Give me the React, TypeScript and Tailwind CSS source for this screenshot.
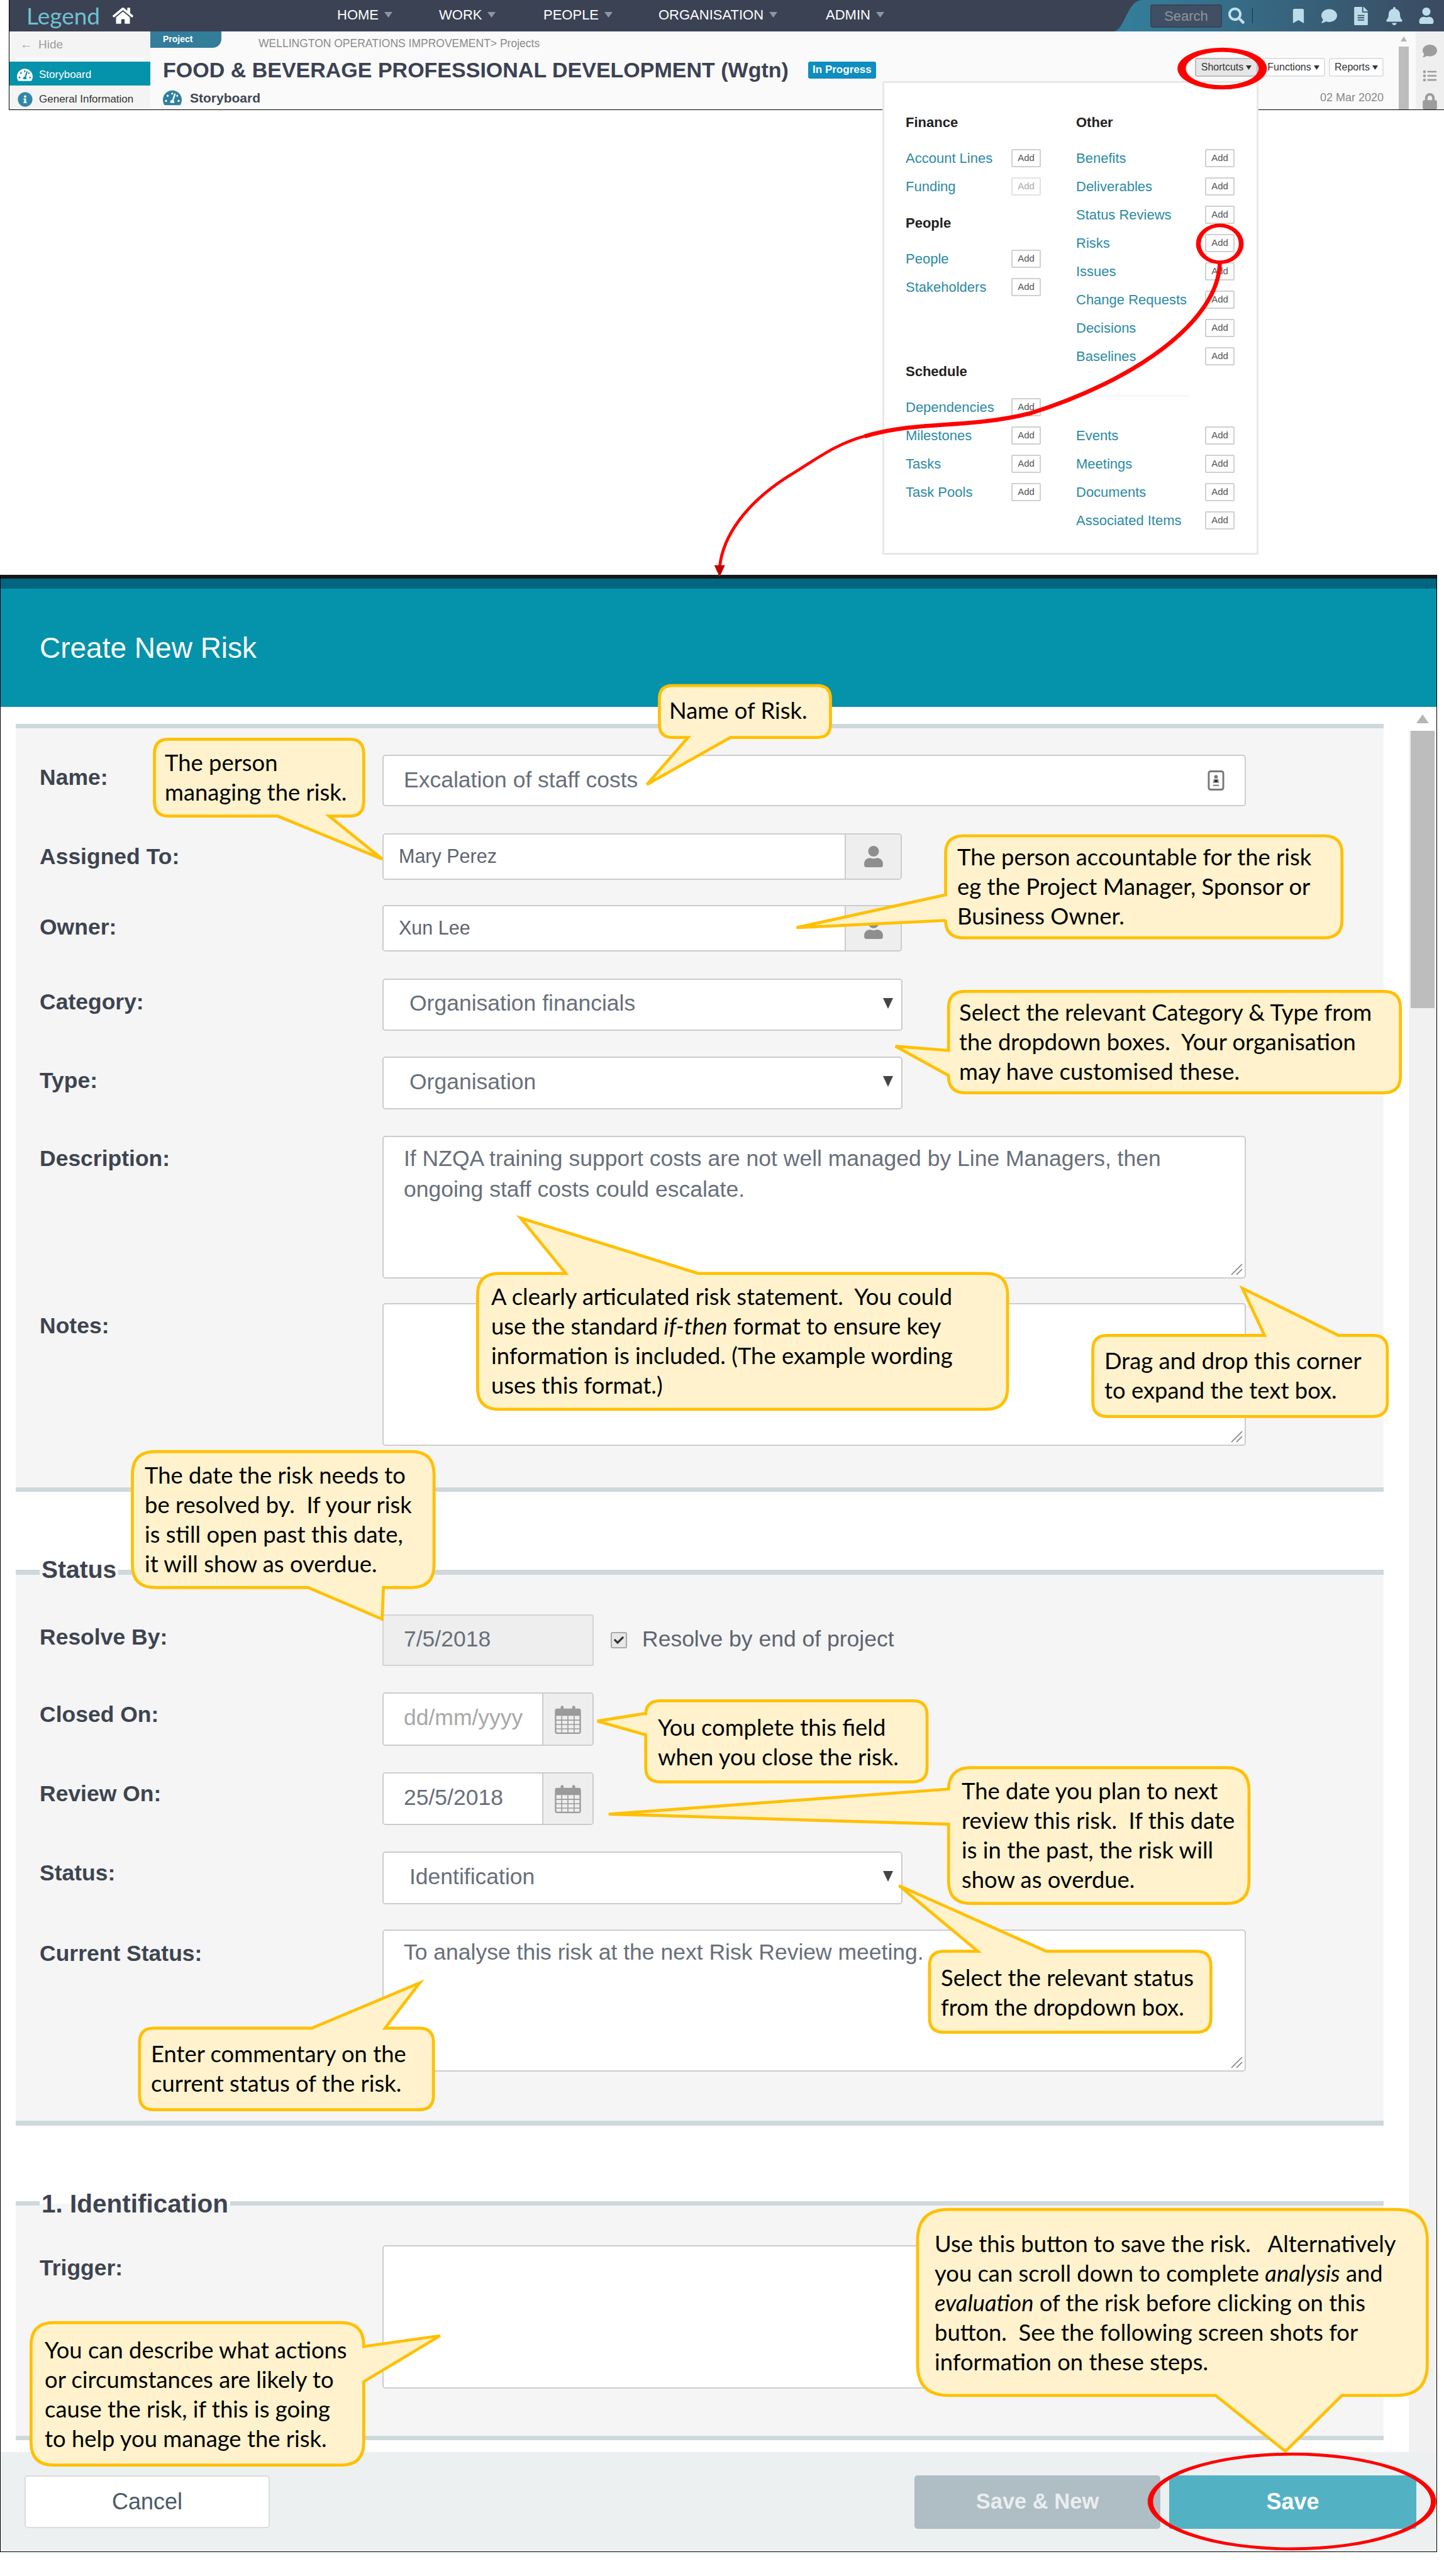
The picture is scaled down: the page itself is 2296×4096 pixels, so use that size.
import React from "react";
import {
  FaHome,
  FaBookmark,
  FaComment,
  FaFileAlt,
  FaBell,
  FaUser,
  FaSearch,
  FaTachometerAlt,
  FaInfoCircle,
  FaList,
  FaLock,
  FaCheck,
} from "react-icons/fa";

const Caret = ({ className }: { className: string }) => (
  <svg viewBox="0 0 10 8" preserveAspectRatio="none" className={className}>
    <polygon points="0,0 10,0 5,8" fill="currentColor" />
  </svg>
);

const Calendar = () => (
  <svg viewBox="0 0 40 40" className="w-[46px] h-[46px] text-[#9a9a9a]">
    <rect x="3" y="6" width="34" height="33" rx="2" fill="none" stroke="currentColor" strokeWidth="2" />
    <rect x="3" y="6" width="34" height="9" fill="currentColor" />
    <rect x="10" y="1" width="4" height="10" rx="2" fill="currentColor" />
    <rect x="26" y="1" width="4" height="10" rx="2" fill="currentColor" />
    <path d="M11.5 15v24M20 15v24M28.5 15v24M3 21h34M3 27h34M3 33h34" stroke="currentColor" strokeWidth="1.4" />
  </svg>
);

const Grip = () => (
  <svg viewBox="0 0 20 20" className="absolute right-[3px] bottom-[3px] w-[20px] h-[20px] text-[#777]">
    <path d="M2 19L19 2M10 19L19 10" stroke="currentColor" strokeWidth="1.5" />
  </svg>
);

const Label = ({ children, cls }: { children: React.ReactNode; cls?: string }) => (
  <div className={`w-[545px] shrink-0 text-[35.5px] leading-[40px] font-bold text-[#3d4450] ${cls || ""}`}>
    {children}
  </div>
);

const boxCls =
  "border-2 border-[#cccccc] rounded-[5px] bg-white text-[35.5px] text-[#686f7a] flex items-center";

const TextBox = ({ h, children }: { h: string; children?: React.ReactNode }) => (
  <div className={`relative w-[1373px] border-2 border-[#cccccc] rounded-[5px] bg-white text-[35.5px] leading-[49px] text-[#686f7a] pl-[32px] pt-[10px] ${h}`}>
    {children}
    <Grip />
  </div>
);

const PersonGroup = ({ value }: { value: string }) => (
  <div className="flex w-[826px] h-[74px] border-2 border-[#cccccc] rounded-[5px] overflow-hidden">
    <div className="flex-1 bg-white flex items-center pl-[24px] text-[30.5px] text-[#5d6470]">{value}</div>
    <div className="w-[89px] bg-[#eeeeee] border-l-2 border-[#cccccc] flex items-center justify-center">
      <FaUser className="w-[30px] h-[34px] text-[#8e8e8e]" />
    </div>
  </div>
);

const Select = ({ value, h }: { value: string; h: string }) => (
  <div className={`${boxCls} w-[827px] justify-between pl-[41px] pr-[13px] ${h}`}>
    <span className="pb-[3px]">{value}</span>
    <Caret className="w-[16px] h-[17px] text-[#444] mb-[5px]" />
  </div>
);

const DateGroup = ({ value, placeholder, h }: { value?: string; placeholder?: string; h: string }) => (
  <div className={`flex w-[336px] border-2 border-[#cccccc] rounded-[5px] overflow-hidden ${h}`}>
    <div className={`flex-1 bg-white flex items-center pl-[32px] pb-[3px] text-[35.5px] ${placeholder ? "text-[#a8a8a8]" : "text-[#686f7a]"}`}>
      {value || placeholder}
    </div>
    <div className="w-[80px] bg-[#eeeeee] border-l-2 border-[#cccccc] flex items-center justify-center">
      <Calendar />
    </div>
  </div>
);

const AddBtn = ({ off }: { off?: boolean }) => (
  <div className={`w-[47px] h-[29px] border-2 rounded-[2px] flex items-center justify-center text-[15px] bg-white ${off ? "border-[#e2e2e2] text-[#aaa]" : "border-[#d0d0d0] text-[#555]"}`}>
    Add
  </div>
);

const LinkRow = ({ name, off, cls }: { name: string; off?: boolean; cls?: string }) => (
  <div className={`h-[45px] flex items-center justify-between ${cls || ""}`}>
    <span className="text-[22px] text-[#2c8aa6]">{name}</span>
    <AddBtn off={off} />
  </div>
);

const MenuHead = ({ name, cls }: { name: string; cls?: string }) => (
  <div className={`h-[45px] flex items-center text-[22px] font-bold text-[#222] ${cls || ""}`}>{name}</div>
);

const ShortcutsMenu = () => (
  <div className="absolute left-[1403px] top-[129px] w-[598px] h-[753px] bg-white border-[3px] border-[#e8e8e8] flex pl-[34px] pt-[40px] gap-[56px]">
    <div className="w-[215px]">
      <MenuHead name="Finance" />
      <LinkRow name="Account Lines" cls="mt-[12px]" />
      <LinkRow name="Funding" off />
      <MenuHead name="People" cls="mt-[13px]" />
      <LinkRow name="People" cls="mt-[12px]" />
      <LinkRow name="Stakeholders" />
      <MenuHead name="Schedule" cls="mt-[89px]" />
      <LinkRow name="Dependencies" cls="mt-[12px]" />
      <LinkRow name="Milestones" />
      <LinkRow name="Tasks" />
      <LinkRow name="Task Pools" />
    </div>
    <div className="w-[252px]">
      <MenuHead name="Other" />
      <LinkRow name="Benefits" cls="mt-[12px]" />
      <LinkRow name="Deliverables" />
      <LinkRow name="Status Reviews" />
      <LinkRow name="Risks" />
      <LinkRow name="Issues" />
      <LinkRow name="Change Requests" />
      <LinkRow name="Decisions" />
      <LinkRow name="Baselines" />
      <div className="w-[180px] h-px bg-[#eeeeee] mt-[40px]" />
      <LinkRow name="Events" cls="mt-[40px]" />
      <LinkRow name="Meetings" />
      <LinkRow name="Documents" />
      <LinkRow name="Associated Items" />
    </div>
  </div>
);

const navItems = [
  { name: "HOME", w: "w-[162px]" },
  { name: "WORK", w: "w-[166px]" },
  { name: "PEOPLE", w: "w-[183px]" },
  { name: "ORGANISATION", w: "w-[266px]" },
  { name: "ADMIN", w: "w-[120px]" },
];

const TopBar = () => (
  <div className="relative h-[50px] bg-[#3b4254] flex items-center">
    <svg viewBox="0 0 526 50" className="absolute right-0 top-0 w-[526px] h-[50px]" preserveAspectRatio="none">
      <defs>
        <linearGradient id="swoosh" x1="0" x2="1" y1="0" y2="0">
          <stop offset="0" stopColor="#33809d" />
          <stop offset="1" stopColor="#3b4a60" />
        </linearGradient>
      </defs>
      <path d="M0 50 C18 50 22 0 46 0 L526 0 L526 50 Z" fill="url(#swoosh)" />
    </svg>
    <div className="relative w-[521px] pl-[27px] flex items-center shrink-0">
      <span className="[font-family:Lato,sans-serif] text-[37px] leading-[46px] text-[#6fc1d2]">Legend</span>
      <FaHome className="ml-[20px] w-[33px] h-[30px] text-white" />
    </div>
    {navItems.map((n) => (
      <div key={n.name} className={`relative flex items-center text-[22px] pb-[3px] text-white ${n.w}`}>
        {n.name}
        <Caret className="ml-[9px] w-[13px] h-[9px] text-[#8a97a0]" />
      </div>
    ))}
    <div className="relative ml-auto flex items-center pr-[15px]">
      <div className="w-[114px] h-[37px] rounded-[4px] bg-[#414f64] border-2 border-[#37465a] flex items-center justify-center text-[22px] text-[#8f949c]">
        Search
      </div>
      <FaSearch className="ml-[10px] w-[26px] h-[26px] text-[#bfe0ee]" />
      <div className="ml-[12px] w-px h-[24px] bg-[#222f3e]" />
      <FaBookmark className="ml-[63px] w-[19px] h-[23px] text-[#bcdcea]" />
      <FaComment className="ml-[24px] w-[31px] h-[25px] text-[#bcdcea]" />
      <FaFileAlt className="ml-[22px] w-[26px] h-[29px] text-[#bcdcea]" />
      <FaBell className="ml-[26px] w-[28px] h-[29px] text-[#bcdcea]" />
      <FaUser className="ml-[24px] w-[26px] h-[26px] text-[#bcdcea]" />
    </div>
  </div>
);

const SubHeader = () => (
  <div className="flex h-[124px]">
    <div className="w-[224px] shrink-0 bg-[#f4f4f4]">
      <div className="h-[42px] flex items-center pl-[17px] text-[19px] text-[#9d9d9d]">
        <span className="mr-[10px]">←</span>Hide
      </div>
      <div className="h-[2px] bg-white mx-[10px]" />
      <div className="h-[38px] mt-[4px] bg-[#0592ab] flex items-center pl-[12px] pt-[3px] text-[17px] text-white">
        <FaTachometerAlt className="w-[25px] h-[26px] mr-[10px]" />
        Storyboard
      </div>
      <div className="h-[36px] mt-[2px] flex items-center pl-[13px] pt-[3px] text-[17px] text-[#333]">
        <FaInfoCircle className="w-[24px] h-[26px] mr-[10px] text-[#2f87a5]" />
        General Information
      </div>
    </div>
    <div className="flex-1 bg-[#fafafa] pr-[24px]">
      <div className="flex h-[43px] items-start">
        <div className="w-[113px] h-[26px] bg-[#337d9b] rounded-br-[14px] pl-[20px] text-[14px] leading-[24px] font-bold text-white">
          Project
        </div>
        <div className="ml-[59px] mt-[8px] text-[17.5px] leading-[22px] text-[#8a8a8a]">
          WELLINGTON OPERATIONS IMPROVEMENT&gt; Projects
        </div>
      </div>
      <div className="flex items-center h-[36px] pl-[20px]">
        <div className="text-[34px] font-bold text-[#3b4254] whitespace-nowrap">
          FOOD &amp; BEVERAGE PROFESSIONAL DEVELOPMENT (Wgtn)
        </div>
        <div className="ml-[31px] w-[108px] h-[27px] rounded-[3px] bg-[#0f8ec0] text-white text-[17px] font-bold flex items-center justify-center">
          In Progress
        </div>
        <div className="ml-auto flex gap-[6px] -mt-[8px]">
          <div className="w-[100px] h-[30px] border-2 border-[#bdbdbd] rounded-[3px] bg-[#e6e6e6] flex items-center justify-center text-[16px] text-[#333]">
            Shortcuts
            <Caret className="ml-[4px] w-[9px] h-[7px] text-[#333]" />
          </div>
          <div className="w-[101px] h-[30px] border-2 border-[#e2e2e2] rounded-[3px] bg-white flex items-center justify-center text-[16px] text-[#333]">
            Functions
            <Caret className="ml-[4px] w-[9px] h-[7px] text-[#333]" />
          </div>
          <div className="w-[87px] h-[30px] border-2 border-[#e2e2e2] rounded-[3px] bg-white flex items-center justify-center text-[16px] text-[#333]">
            Reports
            <Caret className="ml-[4px] w-[9px] h-[7px] text-[#333]" />
          </div>
        </div>
      </div>
      <div className="flex items-center h-[44px] pl-[20px] pt-[9px]">
        <FaTachometerAlt className="w-[30px] h-[27px] text-[#2f7f9e]" />
        <span className="ml-[13px] text-[21px] font-bold text-[#3f4556]">Storyboard</span>
        <span className="ml-auto text-[18px] text-[#888]">02 Mar 2020</span>
      </div>
    </div>
    <div className="w-[27px] bg-[#fafafa] flex flex-col items-start shrink-0">
      <div className="w-[16px] h-[24px] flex items-center justify-center">
        <Caret className="w-[10px] h-[8px] rotate-180 text-[#b5b5b5]" />
      </div>
      <div className="w-[16px] flex-1 bg-[#bdbdbd]" />
    </div>
    <div className="w-[45px] bg-[#efefef] shrink-0 flex flex-col items-center pt-[19px] gap-[17px] text-[#9c9c9c]">
      <FaComment className="w-[23px] h-[25px]" />
      <FaList className="w-[23px] h-[22px]" />
      <FaLock className="w-[23px] h-[27px]" />
    </div>
  </div>
);

const Legend = ({ children, cls }: { children: React.ReactNode; cls: string }) => (
  <div className={`absolute left-[38px] h-[40px] px-[3px] bg-[linear-gradient(#ffffff_50%,#f5f5f5_50%)] leading-[40px] font-bold text-[#3d4450] whitespace-nowrap ${cls}`}>
    {children}
  </div>
);

const CreateRiskDialog = () => (
  <div className="mt-[739px] w-[2285px] border-x border-black flex flex-col">
    <div className="h-[6px] bg-[#16181d]" />
    <div className="h-[16px] bg-[#00657e]" />
    <div className="h-[188px] bg-[#0592ab] flex items-center pl-[62px] text-[46px] text-white">Create New Risk</div>
    <div className="flex h-[2775px] bg-white">
      <div className="flex-1 pl-[24px] pt-[27px]">
        {/* main details */}
        <div className="w-[2175px] h-[1221px] bg-[#f5f5f5] border-y-[7px] border-[#cfd8dc] pl-[38px] pt-[42px]">
          <div className="flex items-center">
            <Label cls="pb-[10px]">Name:</Label>
            <div className={`${boxCls} w-[1373px] h-[82px] pl-[32px] pr-[32px] justify-between`}>
              Excalation of staff costs
              <svg viewBox="0 0 28 34" className="w-[27px] h-[34px] text-[#777]">
                <rect x="2" y="2" width="24" height="30" rx="3" fill="none" stroke="currentColor" strokeWidth="3" />
                <circle cx="14" cy="11" r="3" fill="currentColor" />
                <path d="M9 20h10M9 25h10M11 16h6v4h-6z" stroke="currentColor" strokeWidth="2" />
              </svg>
            </div>
          </div>
          <div className="flex items-center mt-[43px]">
            <Label>Assigned To:</Label>
            <PersonGroup value="Mary Perez" />
          </div>
          <div className="flex items-center mt-[40px]">
            <Label cls="pb-[4px]">Owner:</Label>
            <PersonGroup value="Xun Lee" />
          </div>
          <div className="flex items-center mt-[43px]">
            <Label cls="pb-[10px]">Category:</Label>
            <Select value="Organisation financials" h="h-[83px]" />
          </div>
          <div className="flex items-center mt-[41px]">
            <Label cls="pb-[8px]">Type:</Label>
            <Select value="Organisation" h="h-[84px]" />
          </div>
          <div className="flex items-start mt-[42px]">
            <div className="pt-[16px]">
              <Label>Description:</Label>
            </div>
            <TextBox h="h-[227px]">
              If NZQA training support costs are not well managed by Line Managers, then
              <br />
              ongoing staff costs could escalate.
            </TextBox>
          </div>
          <div className="flex items-start mt-[39px]">
            <div className="pt-[16px]">
              <Label>Notes:</Label>
            </div>
            <TextBox h="h-[227px]" />
          </div>
        </div>

        {/* status */}
        <div className="relative w-[2175px] h-[884px] mt-[124px] bg-[#f5f5f5] border-y-[8px] border-[#cfd8dc] pl-[38px] pt-[63px]">
          <Legend cls="-top-[28px] text-[39px]">Status</Legend>
          <div className="flex items-center">
            <Label cls="pb-[10px]">Resolve By:</Label>
            <div className="w-[336px] h-[82px] border-2 border-[#d4d4d4] rounded-[3px] bg-[#eeeeee] flex items-center pl-[32px] pb-[3px] text-[35.5px] text-[#686f7a]">
              7/5/2018
            </div>
            <div className="ml-[27px] w-[26px] h-[26px] border-2 border-[#aaa] rounded-[3px] bg-[#e8e8e8] flex items-center justify-center">
              <FaCheck className="w-[16px] h-[16px] text-[#333]" />
            </div>
            <span className="ml-[24px] pb-[3px] text-[35.5px] text-[#5d6470]">Resolve by end of project</span>
          </div>
          <div className="flex items-center mt-[42px]">
            <Label cls="pb-[16px]">Closed On:</Label>
            <DateGroup placeholder="dd/mm/yyyy" h="h-[85px]" />
          </div>
          <div className="flex items-center mt-[42px]">
            <Label cls="pb-[16px]">Review On:</Label>
            <DateGroup value="25/5/2018" h="h-[84px]" />
          </div>
          <div className="flex items-center mt-[42px]">
            <Label cls="pb-[16px]">Status:</Label>
            <Select value="Identification" h="h-[84px]" />
          </div>
          <div className="flex items-start mt-[40px]">
            <div className="pt-[18px]">
              <Label>Current Status:</Label>
            </div>
            <TextBox h="h-[226px]">To analyse this risk at the next Risk Review meeting.</TextBox>
          </div>
        </div>

        {/* identification */}
        <div className="relative w-[2175px] h-[380px] mt-[120px] bg-[#f5f5f5] border-y-[7px] border-[#cfd8dc] pl-[38px] pt-[63px]">
          <Legend cls="-top-[23px] text-[40.5px]">1. Identification</Legend>
          <div className="flex items-start">
            <div className="pt-[16px]">
              <Label>Trigger:</Label>
            </div>
            <TextBox h="h-[228px]" />
          </div>
        </div>
      </div>
      {/* scrollbar */}
      <div className="w-[44px] flex flex-col shrink-0">
        <div className="h-[38px] flex items-center justify-center">
          <Caret className="w-[20px] h-[14px] rotate-180 text-[#b5b5b5]" />
        </div>
        <div className="flex-1 bg-[#f1f1f1] px-[3px]">
          <div className="h-[441px] bg-[#bdbdbd]" />
        </div>
      </div>
    </div>
    <div className="h-[159px] bg-[#ecf0f1] border-b border-black flex items-center pl-[38px] pr-[32px] text-[36px]">
      <div className="w-[390px] h-[84px] bg-white border-2 border-[#dcdcdc] rounded-[5px] flex items-center justify-center text-[#4a5a68]">
        Cancel
      </div>
      <div className="ml-auto w-[391px] h-[85px] bg-[#afbdc4] rounded-[5px] flex items-center justify-center text-[34.5px] font-bold text-[#e9eef0]">
        Save &amp; New
      </div>
      <div className="ml-[14px] w-[393px] h-[85px] bg-[#53b1c4] rounded-[3px] flex items-center justify-center font-bold text-white">
        Save
      </div>
    </div>
  </div>
);

type Tail = { side: "top" | "bottom" | "left" | "right"; a: number; b: number; tx: number; ty: number };

// rounded box with a pointer, all numbers in reference pixels
const bubblePath = (x: number, y: number, x2: number, y2: number, r: number, t: Tail) => {
  const tip = `L${t.tx} ${t.ty}`;
  return [
    `M${x + r} ${y}`,
    t.side === "top" ? `L${t.a} ${y} ${tip} L${t.b} ${y}` : "",
    `L${x2 - r} ${y} Q${x2} ${y} ${x2} ${y + r}`,
    t.side === "right" ? `L${x2} ${t.a} ${tip} L${x2} ${t.b}` : "",
    `L${x2} ${y2 - r} Q${x2} ${y2} ${x2 - r} ${y2}`,
    t.side === "bottom" ? `L${t.b} ${y2} ${tip} L${t.a} ${y2}` : "",
    `L${x + r} ${y2} Q${x} ${y2} ${x} ${y2 - r}`,
    t.side === "left" ? `L${x} ${t.b} ${tip} L${x} ${t.a}` : "",
    `L${x} ${y + r} Q${x} ${y} ${x + r} ${y} Z`,
  ].join(" ");
};

const bubbles: { box: [number, number, number, number, number]; tail: Tail }[] = [
  { box: [1106, 1150, 1393, 1237, 22], tail: { side: "bottom", a: 1154, b: 1225, tx: 1085, ty: 1316 } },
  { box: [259, 1240, 610, 1369, 24], tail: { side: "bottom", a: 466, b: 552, tx: 641, ty: 1441 } },
  { box: [1586, 1402, 2251, 1573, 30], tail: { side: "left", a: 1501, b: 1544, tx: 1336, ty: 1556 } },
  { box: [1591, 1663, 2349, 1833, 28], tail: { side: "left", a: 1762, b: 1804, tx: 1502, ty: 1755 } },
  { box: [801, 2136, 1690, 2364, 36], tail: { side: "top", a: 949, b: 1171, tx: 873, ty: 2043 } },
  { box: [1833, 2240, 2327, 2376, 24], tail: { side: "top", a: 2121, b: 2245, tx: 2084, ty: 2161 } },
  { box: [222, 2435, 728, 2663, 38], tail: { side: "bottom", a: 517, b: 643, tx: 641, ty: 2716 } },
  { box: [1083, 2853, 1555, 2989, 24], tail: { side: "left", a: 2874, b: 2910, tx: 1002, ty: 2887 } },
  { box: [1591, 2965, 2095, 3193, 38], tail: { side: "left", a: 3001, b: 3060, tx: 1021, ty: 3043 } },
  { box: [1559, 3273, 2031, 3409, 24], tail: { side: "top", a: 1640, b: 1755, tx: 1508, ty: 3163 } },
  { box: [234, 3402, 727, 3539, 24], tail: { side: "top", a: 523, b: 646, tx: 704, ty: 3326 } },
  { box: [1539, 3706, 2394, 4018, 52], tail: { side: "bottom", a: 2039, b: 2251, tx: 2156, ty: 4112 } },
  { box: [52, 3896, 610, 4135, 38], tail: { side: "right", a: 3936, b: 3995, tx: 738, ty: 3918 } },
];

const notes: { cls: string; lines: React.ReactNode[] }[] = [
  { cls: "left-[1064px] top-[1106px]", lines: ["Name of Risk."] },
  { cls: "left-[262px] top-[1189px]", lines: ["The person", "managing the risk."] },
  { cls: "left-[1522px] top-[1339px]", lines: ["The person accountable for the risk", "eg the Project Manager, Sponsor or", "Business Owner."] },
  { cls: "left-[1525px] top-[1586px]", lines: ["Select the relevant Category & Type from", "the dropdown boxes.  Your organisation", "may have customised these."] },
  {
    cls: "left-[781px] top-[2038px]",
    lines: [
      "A clearly articulated risk statement.  You could",
      <>use the standard <i>if-then</i> format to ensure key</>,
      "information is included. (The example wording",
      "uses this format.)",
    ],
  },
  { cls: "left-[1756px] top-[2140px]", lines: ["Drag and drop this corner", "to expand the text box."] },
  { cls: "left-[230px] top-[2322px]", lines: ["The date the risk needs to", "be resolved by.  If your risk", "is still open past this date,", "it will show as overdue."] },
  { cls: "left-[1046px] top-[2723px]", lines: ["You complete this field", "when you close the risk."] },
  { cls: "left-[1529px] top-[2824px]", lines: ["The date you plan to next", "review this risk.  If this date", "is in the past, the risk will", "show as overdue."] },
  { cls: "left-[1496px] top-[3121px]", lines: ["Select the relevant status", "from the dropdown box."] },
  { cls: "left-[240px] top-[3242px]", lines: ["Enter commentary on the", "current status of the risk."] },
  {
    cls: "left-[1486px] top-[3544px]",
    lines: [
      "Use this button to save the risk.   Alternatively",
      <>you can scroll down to complete <i>analysis</i> and</>,
      <><i>evaluation</i> of the risk before clicking on this</>,
      "button.  See the following screen shots for",
      "information on these steps.",
    ],
  },
  { cls: "left-[71px] top-[3713px]", lines: ["You can describe what actions", "or circumstances are likely to", "cause the risk, if this is going", "to help you manage the risk."] },
];

// hand drawn ovals: thicker on the sides than on top
const ring = (cx: number, cy: number, rx: number, ry: number, ix: number, iy: number) =>
  `M${cx - rx} ${cy} A${rx} ${ry} 0 1 0 ${cx + rx} ${cy} A${rx} ${ry} 0 1 0 ${cx - rx} ${cy} Z ` +
  `M${cx - ix} ${cy} A${ix} ${iy} 0 1 0 ${cx + ix} ${cy} A${ix} ${iy} 0 1 0 ${cx - ix} ${cy} Z`;

const Annotations = () => (
  <>
    <svg viewBox="0 0 2422 4321" className="absolute left-0 top-0 w-[2296px] h-[4096px] pointer-events-none">
      {bubbles.map((b, i) => (
        <path
          key={i}
          d={bubblePath(b.box[0], b.box[1], b.box[2], b.box[3], b.box[4], b.tail)}
          fill="#fff2cc"
          stroke="#ffc000"
          strokeWidth="5"
        />
      ))}
      <path d={ring(2050, 115, 75, 35, 61, 28)} fill="#f00" fillRule="evenodd" />
      <path d={ring(2046, 409, 40, 34, 32, 28)} fill="#f00" fillRule="evenodd" />
      <path
        d="M2046 441 C2044 540 1900 640 1729 693 C1620 720 1540 705 1450 732"
        fill="none"
        stroke="#f00"
        strokeWidth="7"
      />
      <path d="M1452 731 C1400 745 1370 770 1322 799 C1250 845 1212 900 1207 952" fill="none" stroke="#f00" strokeWidth="5" />
      <polygon points="1207,968 1198,948 1216,948" fill="#c00000" />
      <path d={ring(2167, 4196, 242, 82, 233, 77)} fill="#f00" fillRule="evenodd" />
    </svg>
    {notes.map((n, i) => (
      <div key={i} className={`absolute ${n.cls} [font-family:Lato,sans-serif] text-[36.4px] leading-[47px] text-black whitespace-pre`}>
        {n.lines.map((l, j) => (
          <div key={j}>{l}</div>
        ))}
      </div>
    ))}
  </>
);

export default function App() {
  return (
    <div className="relative w-[2296px] h-[4096px] overflow-hidden bg-white [font-family:'Liberation_Sans',Arial,sans-serif]">
      <div className="ml-[14px] border-l border-b border-black">
        <TopBar />
        <SubHeader />
      </div>
      <ShortcutsMenu />
      <CreateRiskDialog />
      <Annotations />
    </div>
  );
}
